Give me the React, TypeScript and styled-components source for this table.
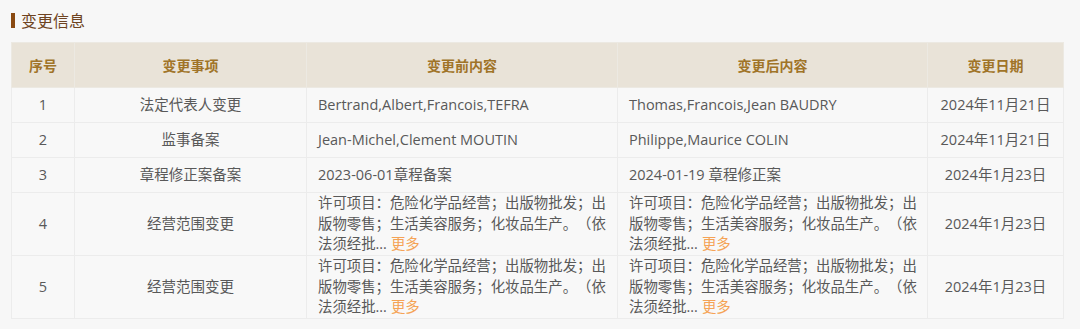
import styled, { createGlobalStyle } from 'styled-components';

const GlobalStyle = createGlobalStyle`
  body {
    margin: 0;
    background: #f7f7f7;
    font-family: "Open Sans", "Noto Sans CJK SC", sans-serif;
  }
`;

const Section = styled.section`
  padding: 9px 17px 0 11px;
`;

const Title = styled.h3`
  display: flex;
  align-items: center;
  gap: 6px;
  margin: 0 0 11px;
  height: 22px;
  font-size: 16px;
  font-weight: 400;
  color: #6e4321;

  &::before {
    content: '';
    width: 4px;
    height: 15px;
    background: #8a4a12;
  }
`;

const Table = styled.table`
  width: 1052px;
  table-layout: fixed;
  border-collapse: collapse;
  font-size: 14.5px;
  color: #595959;
`;

const HeadCell = styled.th`
  height: 44px;
  padding: 0 12px;
  background: #e9e3d8;
  color: #a07428;
  font-weight: 700;
  font-size: 14px;
  border: 1px solid #ece9e2;
`;

const Cell = styled.td<{ $center?: boolean; $tall?: boolean }>`
  height: ${p => (p.$tall ? '62px' : '34px')};
  padding: 0 11px;
  line-height: 20.5px;
  text-align: ${p => (p.$center ? 'center' : 'left')};
  vertical-align: middle;
  border: 1px solid #ececec;
  background: #f8f8f8;
`;

const Line = styled.span`
  display: block;
  white-space: nowrap;
  font-size: 14.4px;
  text-spacing-trim: space-all;
`;

const More = styled.a`
  color: #f5a356;
  margin-left: 4px;
  cursor: pointer;
`;

const scope = ['许可项目：危险化学品经营；出版物批发；出', '版物零售；生活美容服务；化妆品生产。（依', '法须经批...'];

type Row = {
  no: number;
  item: string;
  before: string | string[];
  after: string | string[];
  date: string;
};

const rows: Row[] = [
  { no: 1, item: '法定代表人变更', before: 'Bertrand,Albert,Francois,TEFRA', after: 'Thomas,Francois,Jean BAUDRY', date: '2024年11月21日' },
  { no: 2, item: '监事备案', before: 'Jean-Michel,Clement MOUTIN', after: 'Philippe,Maurice COLIN', date: '2024年11月21日' },
  { no: 3, item: '章程修正案备案', before: '2023-06-01章程备案', after: '2024-01-19 章程修正案', date: '2024年1月23日' },
  { no: 4, item: '经营范围变更', before: scope, after: scope, date: '2024年1月23日' },
  { no: 5, item: '经营范围变更', before: scope, after: scope, date: '2024年1月23日' },
];

const Content = ({ value }: { value: string | string[] }) => {
  if (typeof value === 'string') return <>{value}</>;
  return (
    <>
      {value.map((line, i) => (
        <Line key={i}>
          {line}
          {i === value.length - 1 && <More>更多</More>}
        </Line>
      ))}
    </>
  );
};

const App = () => (
  <Section>
    <GlobalStyle />
    <Title>变更信息</Title>
    <Table>
      <colgroup>
        <col style={{ width: 63 }} />
        <col style={{ width: 232 }} />
        <col style={{ width: 311 }} />
        <col style={{ width: 310 }} />
        <col style={{ width: 136 }} />
      </colgroup>
      <thead>
        <tr>
          <HeadCell>序号</HeadCell>
          <HeadCell>变更事项</HeadCell>
          <HeadCell>变更前内容</HeadCell>
          <HeadCell>变更后内容</HeadCell>
          <HeadCell>变更日期</HeadCell>
        </tr>
      </thead>
      <tbody>
        {rows.map(r => (
          <tr key={r.no}>
            <Cell $center $tall={Array.isArray(r.before)}>{r.no}</Cell>
            <Cell $center>{r.item}</Cell>
            <Cell>
              <Content value={r.before} />
            </Cell>
            <Cell>
              <Content value={r.after} />
            </Cell>
            <Cell $center>{r.date}</Cell>
          </tr>
        ))}
      </tbody>
    </Table>
  </Section>
);

export default App;
